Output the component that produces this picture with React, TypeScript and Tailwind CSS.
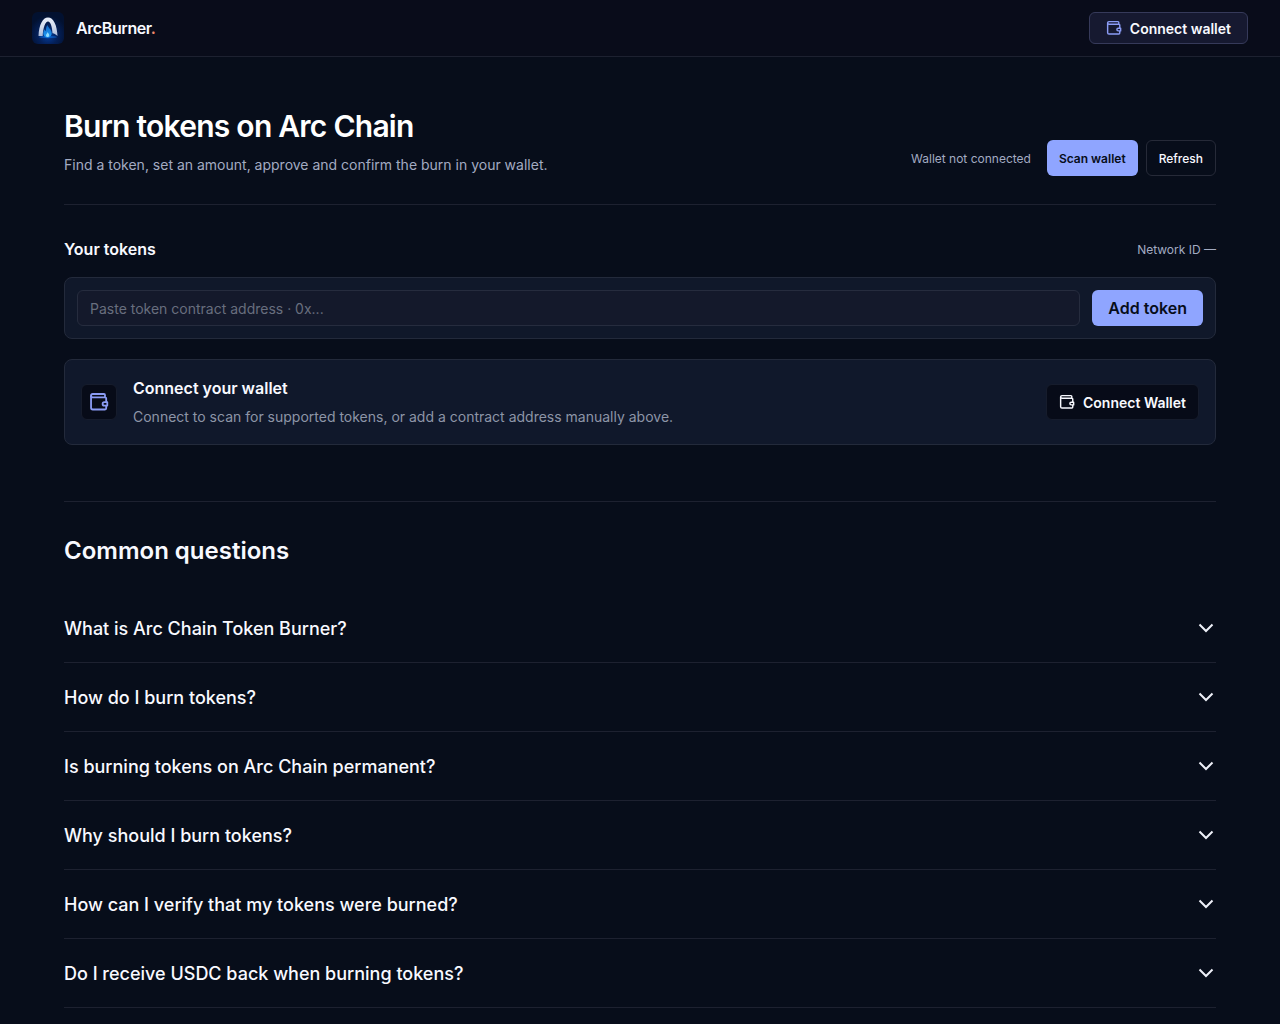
import { useState } from "react";

const questions = [
  "What is Arc Chain Token Burner?",
  "How do I burn tokens?",
  "Is burning tokens on Arc Chain permanent?",
  "Why should I burn tokens?",
  "How can I verify that my tokens were burned?",
  "Do I receive USDC back when burning tokens?",
];

function WalletIcon({ className }: { className: string }) {
  return (
    <svg
      viewBox="0 0 20 20"
      fill="none"
      stroke="currentColor"
      strokeWidth="1.8"
      strokeLinejoin="round"
      className={className}
      aria-hidden="true"
    >
      <path d="M16 5.300V3a1 1 0 0 0-1-1H3.700a1.650 1.650 0 0 0 0 3.300h12.300a1.200 1.200 0 0 1 1.200 1.200v3.700" />
      <path d="M2.050 3.500v12.300a1.700 1.700 0 0 0 1.700 1.700h12.250a1.200 1.200 0 0 0 1.200-1.200v-2.700" />
      <path d="M18.300 10.200h-3a1.700 1.700 0 0 0 0 3.400h3Z" />
    </svg>
  );
}

function Chevron() {
  return (
    <svg
      viewBox="0 0 20 20"
      fill="none"
      stroke="currentColor"
      strokeWidth="2"
      className="size-5 shrink-0 text-[#eef0f8]"
      aria-hidden="true"
    >
      <path d="M3.500 5.500 10 12l6.500-6.500" />
    </svg>
  );
}

function Logo() {
  return (
    <svg viewBox="0 0 32 32" className="size-8 rounded-md" aria-hidden="true">
      <defs>
        <radialGradient id="logo-bg" cx="50%" cy="72%" r="60%">
          <stop offset="0" stopColor="#0540a0" />
          <stop offset="0.5" stopColor="#04205a" />
          <stop offset="1" stopColor="#021130" />
        </radialGradient>
        <linearGradient id="logo-arc" x1="0" y1="0" x2="0" y2="1">
          <stop offset="0" stopColor="#e8eefa" />
          <stop offset="0.5" stopColor="#d3dcee" />
          <stop offset="1" stopColor="#a9b9d8" />
        </linearGradient>
        <linearGradient id="logo-flame" x1="0" y1="0" x2="0" y2="1">
          <stop offset="0" stopColor="#1268c8" />
          <stop offset="1" stopColor="#1f9cf5" />
        </linearGradient>
      </defs>
      <rect width="32" height="32" fill="url(#logo-bg)" />
      <path
        d="M6.500 24C7 13 10.500 5.500 16 5.500S25 13 25.500 24c-1.500-1.500-3-2.500-5-2.800C20.200 15 18.500 9.500 16 9.500s-5 6-5.300 14.500Z"
        fill="url(#logo-arc)"
      />
      <ellipse cx="16" cy="25" rx="9" ry="1.200" fill="#0b6ce0" opacity="0.6" />
      <path
        d="M15.500 13c.4 2.600 4.200 4.400 4.200 8.200 0 2.400-1.800 4.300-4.200 4.300s-4.200-1.900-4.200-4.300c0-1.800.8-2.700 1.500-3.900.2 1 .6 1.500 1.200 1.800-.2-2.500.300-4.500 1.500-6.100Z"
        fill="url(#logo-flame)"
      />
      <path
        d="M15.700 20c.2 1.200 1.500 1.900 1.500 3.300 0 1.100-.7 1.800-1.600 1.800s-1.600-.7-1.600-1.800c0-1.300 1.400-1.900 1.700-3.300Z"
        fill="#8fdcff"
      />
    </svg>
  );
}

export default function App() {
  const [address, setAddress] = useState("");

  return (
    <div className="min-h-screen bg-[#070d1a] font-[Inter,sans-serif] text-[#f8f9ff]">
      <header className="flex h-[57px] items-center justify-between border-b border-[#1d2130] bg-[#090c1a] px-8">
        <a href="#" className="flex items-center gap-3">
          <Logo />
          <span className="text-base font-semibold tracking-tight">
            ArcBurner<span className="text-[#f08a6c]">.</span>
          </span>
        </a>
        <button
          type="button"
          className="flex h-8 items-center gap-2 rounded-md border border-[#363a5a] bg-[#161930] px-4 text-sm leading-[21px] font-semibold"
        >
          <WalletIcon className="size-4 text-[#8b9cf5]" />
          Connect wallet
        </button>
      </header>

      <main className="px-16 pt-12">
        <section className="flex items-end justify-between border-b border-[#1d2130] pb-7">
          <div>
            <h1 className="text-3xl leading-[43px] font-semibold tracking-tight text-white">Burn tokens on Arc Chain</h1>
            <p className="mt-1.5 text-sm leading-[22px] text-[#a3abc2]">
              Find a token, set an amount, approve and confirm the burn in your wallet.
            </p>
          </div>
          <div className="flex items-center gap-2 text-xs leading-[17px]">
            <span className="mr-2 text-[#a3abc2]">Wallet not connected</span>
            <button type="button" className="h-9 rounded-md bg-[#8fa5ff] px-3 font-semibold text-[#070d1a]">
              Scan wallet
            </button>
            <button type="button" className="h-9 rounded-md border border-[#262a38] px-3 font-medium">
              Refresh
            </button>
          </div>
        </section>

        <section className="pt-8">
          <div className="flex items-center justify-between">
            <h2 className="text-base font-semibold">Your tokens</h2>
            <span className="text-xs leading-[17px] text-[#a3abc2]">Network ID —</span>
          </div>

          <form
            onSubmit={(event) => event.preventDefault()}
            className="mt-4 flex gap-3 rounded-lg border border-[#232a3b] bg-[#10182a] p-3"
          >
            <input
              type="text"
              aria-label="Token contract address"
              value={address}
              onChange={(event) => setAddress(event.target.value)}
              placeholder="Paste token contract address · 0x..."
              className="h-9 min-w-0 flex-1 rounded-md border border-[#262c3e] bg-[#14192b] px-3 text-sm outline-none placeholder:text-[#686e7e]"
            />
            <button type="submit" className="h-9 rounded-md bg-[#8fa5ff] px-4 text-base font-semibold text-[#070d1a]">
              Add token
            </button>
          </form>

          <div className="mt-5 flex items-center gap-4 rounded-lg border border-[#232a3b] bg-[#10182b] p-4">
            <div className="flex size-9 items-center justify-center rounded-md border border-[#161c2c] bg-[#070b18]">
              <WalletIcon className="size-5 text-[#8b9cf5]" />
            </div>
            <div className="flex-1">
              <h3 className="text-base leading-6 font-semibold">Connect your wallet</h3>
              <p className="mt-1.5 text-sm leading-[22px] text-[#8d95a7]">
                Connect to scan for supported tokens, or add a contract address manually above.
              </p>
            </div>
            <button
              type="button"
              className="flex h-9 items-center gap-2 rounded-md border border-[#161c2c] bg-[#070b18] px-3 text-sm leading-[21px] font-semibold"
            >
              <WalletIcon className="size-4" />
              Connect Wallet
            </button>
          </div>
        </section>

        <section className="mt-14 border-t border-[#1d2130] pt-8">
          <h2 className="text-2xl leading-[34px] font-semibold">Common questions</h2>
          <div className="mt-[26px]">
            {questions.map((question) => (
              <button
                key={question}
                type="button"
                aria-expanded="false"
                className="flex w-full items-center justify-between border-b border-[#1d2130] pt-[21px] pb-5 text-left text-lg leading-[27px] font-medium"
              >
                {question}
                <Chevron />
              </button>
            ))}
          </div>
        </section>
      </main>
    </div>
  );
}
